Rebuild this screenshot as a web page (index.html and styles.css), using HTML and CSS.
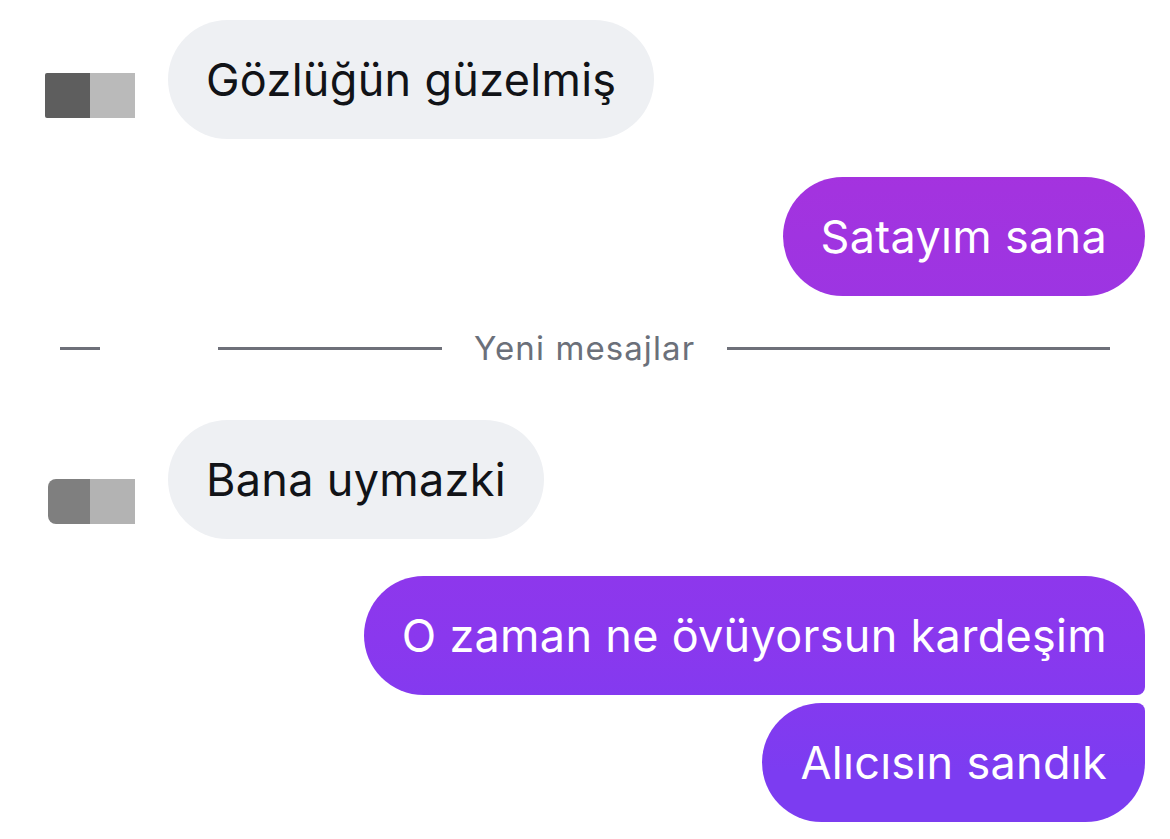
FILE: index.html
```html
<!DOCTYPE html>
<html lang="tr">

<head>
    <meta charset="UTF-8">
    <meta name="viewport" content="width=device-width, initial-scale=1.0">
    <title>Sohbet</title>
    <link rel="stylesheet" href="styles.css">
</head>

<body>
    <div class="chat">
        <!-- incoming -->
        <div class="row in">
            <div class="avatar">
                <span class="px dark"></span>
                <span class="px light"></span>
            </div>
            <div class="bubble">Gözlüğün güzelmiş</div>
        </div>

        <!-- outgoing -->
        <div class="row out">
            <div class="bubble">Satayım sana</div>
        </div>

        <!-- unread separator -->
        <div class="divider">
            <span class="line short"></span>
            <span class="line mid"></span>
            <span class="label">Yeni mesajlar</span>
            <span class="line"></span>
        </div>

        <div class="row in second">
            <div class="avatar round">
                <span class="px dark"></span>
                <span class="px light"></span>
            </div>
            <div class="bubble">Bana uymazki</div>
        </div>

        <div class="group out">
            <div class="bubble first">O zaman ne övüyorsun kardeşim</div>
            <div class="bubble last">Alıcısın sandık</div>
        </div>
    </div>
</body>

</html>
```

FILE: styles.css
```css
body {
    margin: 0;
    background: #fff;
    font-family: Inter, "Noto Sans", sans-serif;
}

.chat {
    display: flex;
    flex-direction: column;
    padding: 20px 25px 0 45px;
}

.row {
    display: flex;
    align-items: flex-end;
}

.row.out,
.group.out {
    justify-content: flex-end;
}

.row.out {
    margin-top: 38px;
}

.group {
    display: flex;
    flex-direction: column;
    align-items: flex-end;
    gap: 8px;
    margin-top: 37px;
}

.bubble {
    padding: 36px 38px;
    font-size: 45px;
    line-height: 47px;
    letter-spacing: 0.3px;
    border-radius: 60px;
    white-space: nowrap;
}

.in .bubble {
    background: #eef0f3;
    color: #111317;
}

/* outgoing bubbles share one gradient across the screen */
.out .bubble {
    color: #fff;
    background: linear-gradient(180deg, #b02fdb 0%, #a034e0 28%, #8a38ee 76%, #7c3cf1 92%);
    background-attachment: fixed;
}

.out .bubble.first {
    border-bottom-right-radius: 8px;
}

.out .bubble.last {
    border-top-right-radius: 8px;
}

/* blurred profile picture */
.avatar {
    display: flex;
    margin: 0 33px 21px 0;
}

.px {
    width: 45px;
    height: 45px;
}

.px.dark {
    background: #5e5e5e;
    border-radius: 2px 0 0 2px;
}

.px.light {
    background: #bababa;
}

.second .avatar {
    margin-bottom: 15px;
}

.avatar.round .px.dark {
    width: 42px;
    margin-left: 3px;
    background: #7f7f7f;
    border-radius: 8px 0 0 8px;
}

.avatar.round .px.light {
    background: #b3b3b3;
}

/* separator */
.divider {
    display: flex;
    align-items: center;
    height: 40px;
    margin: 32px 35px 52px 15px;
}

.line {
    flex: 1;
    height: 3px;
    background: #6e7079;
}

.line.short {
    flex: none;
    width: 40px;
    margin-right: 118px;
}

.line.mid {
    flex: none;
    width: 224px;
}

.label {
    padding: 0 32px;
    font-size: 33px;
    letter-spacing: 1.1px;
    color: #6b707a;
}
```
